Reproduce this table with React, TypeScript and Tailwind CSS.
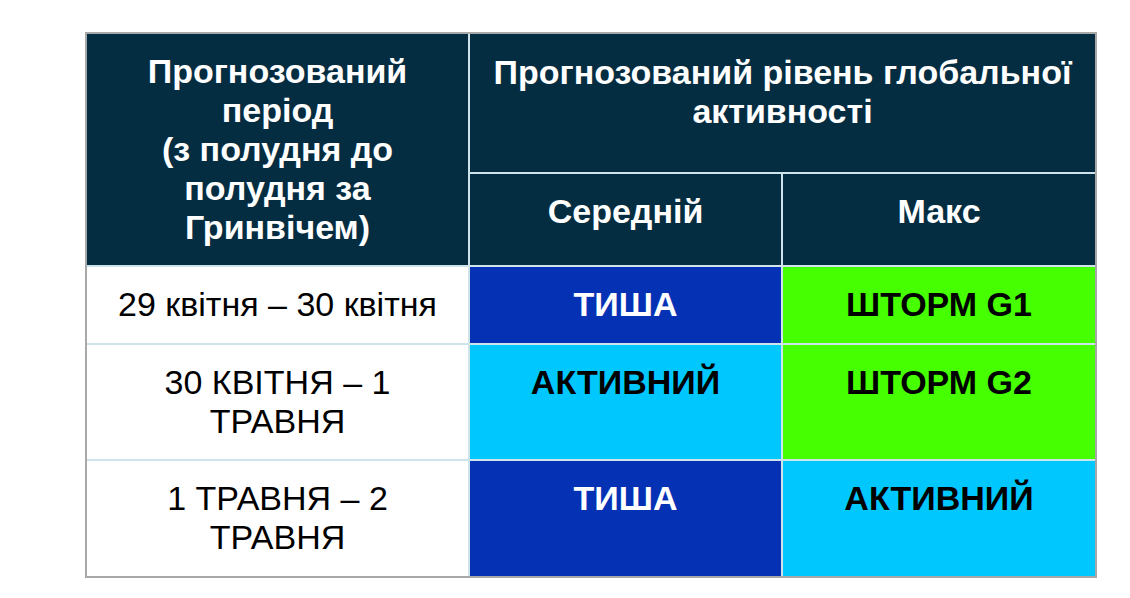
import { Fragment, type ReactNode } from "react"

const font = { fontFamily: '"Liberation Sans", Arial, sans-serif' }

type Cell = { text: string; bg: string; color: string }

const rows: { period: ReactNode; avg: Cell; max: Cell; h: string }[] = [
  {
    period: "29 квітня – 30 квітня",
    avg: { text: "ТИША", bg: "bg-[#0532b5]", color: "text-white" },
    max: { text: "ШТОРМ G1", bg: "bg-[#46ff00]", color: "text-black" },
    h: "h-[76px]",
  },
  {
    period: (
      <>
        30 КВІТНЯ – 1
        <br />
        ТРАВНЯ
      </>
    ),
    avg: { text: "АКТИВНИЙ", bg: "bg-[#00c8ff]", color: "text-black" },
    max: { text: "ШТОРМ G2", bg: "bg-[#46ff00]", color: "text-black" },
    h: "h-[114px]",
  },
  {
    period: (
      <>
        1 ТРАВНЯ – 2
        <br />
        ТРАВНЯ
      </>
    ),
    avg: { text: "ТИША", bg: "bg-[#0532b5]", color: "text-white" },
    max: { text: "АКТИВНИЙ", bg: "bg-[#00c8ff]", color: "text-black" },
    h: "h-[115px]",
  },
]

export default function App() {
  return (
    <div className="min-h-[598px] w-[1130px] bg-white pt-[32px] pl-[85px]" style={font}>
      <div className="w-[1012px] border-2 border-[#a8a8a8]">
        <div className="grid grid-cols-[381px_311px_312px] gap-[2px] bg-[#cfe4ea] text-[34px] leading-[39px]">
          {/* header */}
          <div className="row-span-2 bg-[#052d42] pt-[18px] text-center font-bold text-white">
            Прогнозований
            <br />
            період
            <br />
            (з полудня до
            <br />
            полудня за
            <br />
            Гринвічем)
          </div>
          <div className="col-span-2 h-[138px] bg-[#052d42] pt-[19px] text-center font-bold text-white">
            Прогнозований рівень глобальної
            <br />
            активності
          </div>
          <div className="h-[91px] bg-[#052d42] pt-[18px] text-center font-bold text-white">Середній</div>
          <div className="h-[91px] bg-[#052d42] pt-[18px] text-center font-bold text-white">Макс</div>

          {rows.map((r, i) => (
            <Fragment key={i}>
              <div className={`${r.h} bg-white pt-[18px] text-center text-black`}>{r.period}</div>
              <div className={`${r.h} ${r.avg.bg} ${r.avg.color} pt-[18px] text-center font-bold`}>
                {r.avg.text}
              </div>
              <div className={`${r.h} ${r.max.bg} ${r.max.color} pt-[18px] text-center font-bold`}>
                {r.max.text}
              </div>
            </Fragment>
          ))}
        </div>
      </div>
    </div>
  )
}
